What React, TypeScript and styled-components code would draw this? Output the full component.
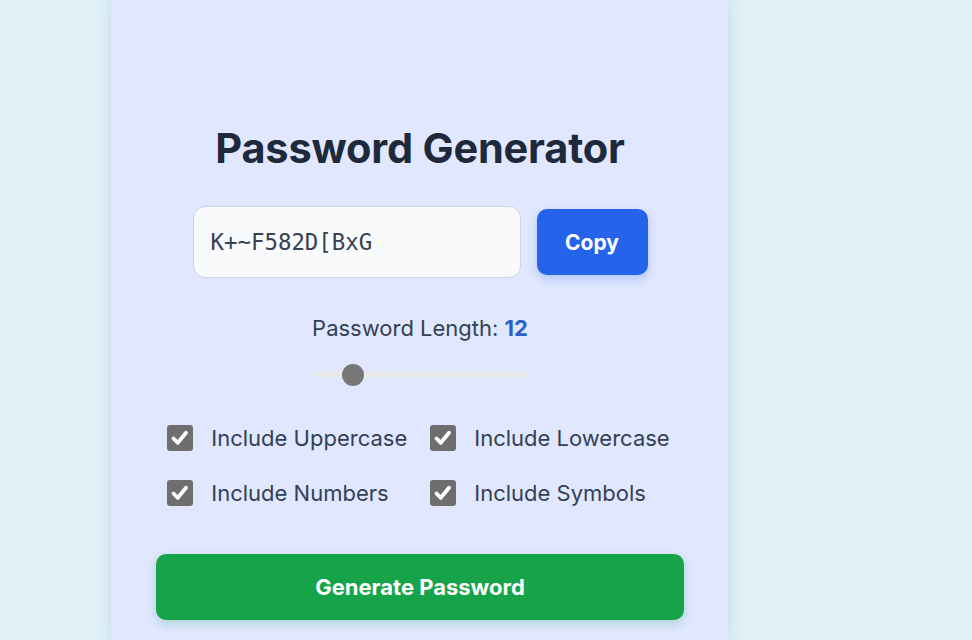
import React, { useState } from "react";
import styled, { createGlobalStyle } from "styled-components";

const Global = createGlobalStyle`
  html, body { margin: 0; padding: 0; }
  body {
    background: #e0f1f8;
    font-family: Inter, "Noto Sans", sans-serif;
    overflow: hidden;
  }
`;

const Page = styled.div`
  display: flex;
  min-height: 640px;
  padding-left: 111px;
`;

const Card = styled.main`
  width: 617px;
  box-sizing: border-box;
  height: 640px;
  background: #e0e7ff;
  box-shadow: 0 0 14px rgba(120, 140, 170, 0.25);
  padding: 124px 44px 0 45px;
  display: flex;
  flex-direction: column;
  align-items: center;
`;

const Title = styled.h1`
  margin: 0;
  font-size: 41.5px;
  line-height: 48px;
  font-weight: 700;
  color: #1e293b;
  letter-spacing: -0.2px;
`;

const OutputRow = styled.div`
  display: flex;
  align-items: center;
  gap: 16px;
  margin-top: 34px;
`;

const Output = styled.input`
  width: 328px;
  height: 72px;
  box-sizing: border-box;
  padding: 0 17px;
  border: 1px solid #cbd5e1;
  border-radius: 12px;
  background: #f8fafc;
  font-family: "DejaVu Sans Mono", monospace;
  font-size: 22.4px;
  color: #374151;
  outline: none;
`;

const CopyButton = styled.button`
  width: 111px;
  height: 66px;
  border: none;
  border-radius: 10px;
  background: #2563eb;
  color: #ffffff;
  font-family: Inter, sans-serif;
  font-weight: 700;
  font-size: 21px;
  box-shadow: 0 4px 10px rgba(37, 99, 235, 0.25);
  cursor: pointer;
`;

const LengthLabel = styled.div`
  margin-top: 36px;
  font-size: 22px;
  line-height: 28px;
  color: #334155;
`;

const LengthValue = styled.span`
  color: #2a62c9;
  font-weight: 700;
`;

const Range = styled.input`
  -webkit-appearance: none;
  appearance: none;
  width: 215px;
  height: 7px;
  margin: 29px 0 0 0;
  border-radius: 4px;
  background: #e6e8ec;
  outline: none;

  &::-webkit-slider-thumb {
    -webkit-appearance: none;
    appearance: none;
    width: 22px;
    height: 22px;
    border-radius: 50%;
    background: #777777;
    border: none;
    cursor: pointer;
  }
`;

const Options = styled.div`
  display: grid;
  grid-template-columns: auto auto;
  column-gap: 23px;
  row-gap: 29px;
  margin-top: 47px;
  align-self: center;
  margin-left: -3px;
`;

const Option = styled.label`
  display: flex;
  align-items: center;
  gap: 18px;
  font-size: 22px;
  line-height: 26px;
  color: #334155;
  cursor: pointer;
`;

const Box = styled.span<{ $checked: boolean }>`
  width: 26px;
  height: 26px;
  border-radius: 3px;
  background: ${(p) => (p.$checked ? "#6e6e6e" : "#ffffff")};
  border: ${(p) => (p.$checked ? "none" : "2px solid #6e6e6e")};
  box-sizing: border-box;
  display: flex;
  align-items: center;
  justify-content: center;
  flex-shrink: 0;
`;

const HiddenCheck = styled.input`
  display: none;
`;

const GenerateButton = styled.button`
  width: 528px;
  height: 66px;
  margin-top: 48px;
  border: none;
  border-radius: 10px;
  background: #16a34a;
  color: #ffffff;
  font-family: Inter, sans-serif;
  font-weight: 700;
  font-size: 22px;
  box-shadow: 0 4px 10px rgba(22, 163, 74, 0.25);
  cursor: pointer;
`;

const Check = () => (
  <svg width="20" height="20" viewBox="0 0 20 20">
    <path
      d="M3.5 10.5 L7.8 14.8 L16 4.8"
      fill="none"
      stroke="#ffffff"
      strokeWidth="3.8"
      strokeLinecap="round"
      strokeLinejoin="round"
    />
  </svg>
);

const optionList = [
  { key: "upper", label: "Include Uppercase" },
  { key: "lower", label: "Include Lowercase" },
  { key: "numbers", label: "Include Numbers" },
  { key: "symbols", label: "Include Symbols" },
];

export default function App() {
  const [length, setLength] = useState(12);
  const [opts, setOpts] = useState<Record<string, boolean>>({
    upper: true,
    lower: true,
    numbers: true,
    symbols: true,
  });
  const [password] = useState("K+~F582D[BxG");

  return (
    <>
      <Global />
      <Page>
        <Card>
          <Title>Password Generator</Title>
          <OutputRow>
            <Output readOnly value={password} />
            <CopyButton>Copy</CopyButton>
          </OutputRow>
          <LengthLabel>
            Password Length: <LengthValue>{length}</LengthValue>
          </LengthLabel>
          <Range
            type="range"
            min={8}
            max={34}
            value={length}
            onChange={(e) => setLength(Number(e.target.value))}
          />
          <Options>
            {optionList.map((o) => (
              <Option key={o.key}>
                <HiddenCheck
                  type="checkbox"
                  checked={opts[o.key]}
                  onChange={() => setOpts({ ...opts, [o.key]: !opts[o.key] })}
                />
                <Box $checked={opts[o.key]}>{opts[o.key] && <Check />}</Box>
                {o.label}
              </Option>
            ))}
          </Options>
          <GenerateButton>Generate Password</GenerateButton>
        </Card>
      </Page>
    </>
  );
}
